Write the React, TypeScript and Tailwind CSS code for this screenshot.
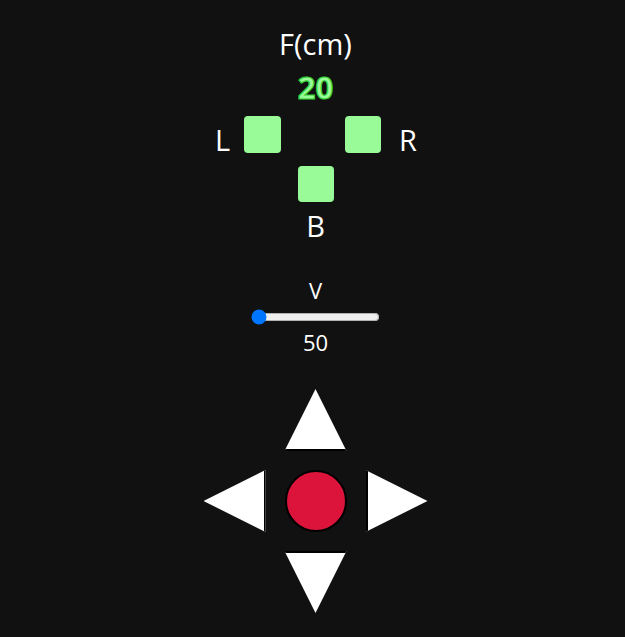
export default function App() {
  return (
    <div className="min-h-[637px] bg-[#111111] pl-[6px] font-['Open_Sans',sans-serif] text-white">
      <div className="flex flex-col items-center pt-[28px]">
        {/* sensor readout */}
        <div className="text-[29px] leading-[32px]">F(cm)</div>
        <div className="mt-[11px] text-[31px] font-bold leading-[32px] text-[#98fb98] [-webkit-text-stroke:1.2px_#32cd32]">
          20
        </div>

        <div className="mt-[9px] flex items-center">
          <span className="mt-[12px] w-[13px] text-[29px] leading-[32px]">L</span>
          <div className="ml-[16px] h-[37px] w-[37px] rounded-[4px] bg-[#98fb98]" />
          <div className="w-[64px]" />
          <div className="h-[37px] w-[36px] rounded-[4px] bg-[#98fb98]" />
          <span className="mt-[12px] ml-[18px] w-[17px] text-[29px] leading-[32px]">R</span>
        </div>
        <div className="mt-[10px] h-[36px] w-[36px] rounded-[4px] bg-[#98fb98]" />
        <div className="mt-[8px] text-[29px] leading-[32px]">B</div>

        {/* speed slider */}
        <div className="mt-[35px] text-[22px] leading-[26px]">V</div>
        <input
          type="range"
          min={50}
          max={255}
          defaultValue={50}
          className="mt-[6px] w-[129px]"
        />
        <div className="mt-[4px] text-[22px] leading-[26px]">50</div>

        {/* direction pad */}
        <div className="mt-[34px] grid grid-cols-[62px_62px_62px] grid-rows-[62px_62px_62px] gap-[19px]">
          <div />
          <button className="h-[62px] w-[62px] border-b-2 border-black bg-white [clip-path:polygon(50%_0,100%_100%,0_100%)]" />
          <div />
          <button className="h-[62px] w-[62px] border-r-2 border-black bg-white [clip-path:polygon(0_50%,100%_0,100%_100%)]" />
          <button className="h-[62px] w-[62px] rounded-full border-2 border-black bg-[#dc143c]" />
          <button className="h-[62px] w-[62px] border-l-2 border-black bg-white [clip-path:polygon(0_0,100%_50%,0_100%)]" />
          <div />
          <button className="h-[62px] w-[62px] border-t-2 border-black bg-white [clip-path:polygon(0_0,100%_0,50%_100%)]" />
          <div />
        </div>
      </div>
    </div>
  );
}
